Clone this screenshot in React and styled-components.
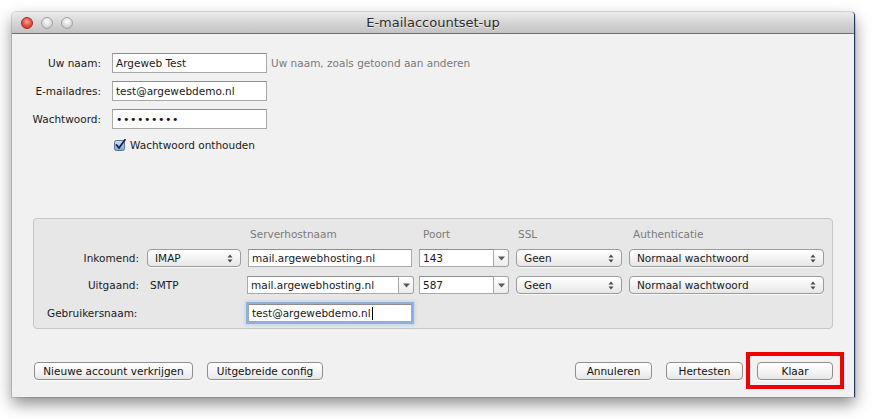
import React from "react";
import styled, { createGlobalStyle } from "styled-components";

const GlobalStyle = createGlobalStyle`
  html, body {
    margin: 0;
    padding: 0;
    background: #ffffff;
  }
  body {
    font-family: "DejaVu Sans", "Liberation Sans", sans-serif;
    font-size: 10.5px;
    color: #1a1a1a;
  }
`;

const Page = styled.div`
  width: 876px;
  height: 419px;
  padding: 12px 0 0 12px;
  box-sizing: border-box;
`;

const Window = styled.div`
  width: 843px;
  height: 385px;
  display: flex;
  flex-direction: column;
  background: #f1f1f1;
  border-right: 1px solid #1f3562;
  box-sizing: border-box;
  border-radius: 4px 4px 0 0;
  box-shadow: 0 7px 16px rgba(0, 0, 0, 0.45), 0 0 0 1px rgba(0, 0, 0, 0.12);
`;

const TitleBar = styled.div`
  height: 22px;
  flex: none;
  box-sizing: border-box;
  display: grid;
  grid-template-columns: 1fr auto 1fr;
  align-items: center;
  padding: 0 9px;
  border-radius: 4px 4px 0 0;
  background: linear-gradient(#ececec, #d2d2d2 60%, #c3c3c3);
  border-bottom: 1px solid #6f6f6f;
`;

const Lights = styled.div`
  display: flex;
  gap: 8px;
`;

const Light = styled.span`
  width: 12px;
  height: 12px;
  border-radius: 50%;
  box-sizing: border-box;
  border: 1px solid ${(p) => (p.$red ? "#a52a22" : "#a3a3a3")};
  background: ${(p) =>
    p.$red
      ? "radial-gradient(circle at 50% 35%, #ffb3a8 0%, #f35d4f 40%, #c4251b 100%)"
      : "radial-gradient(circle at 50% 35%, #ffffff 0%, #e2e2e2 45%, #b9b9b9 100%)"};
`;

const Title = styled.div`
  font-size: 13px;
  color: #2c2c2c;
  text-shadow: 0 1px 0 rgba(255, 255, 255, 0.6);
`;

const Content = styled.div`
  flex: 1;
  display: flex;
  flex-direction: column;
  padding: 19px 21px 0 21px;
`;

const Form = styled.div`
  display: grid;
  grid-template-columns: 68px 155px auto;
  grid-auto-rows: 20px;
  column-gap: 11px;
  row-gap: 8px;
  align-items: center;
`;

const Label = styled.div`
  display: flex;
  justify-content: flex-end;
  white-space: nowrap;
`;

const TextField = styled.div`
  height: ${(p) => p.$h || 20}px;
  box-sizing: border-box;
  background: #ffffff;
  border: 1px solid #a9a9a9;
  border-top-color: #8e8e8e;
  padding: 0 3px;
  display: flex;
  align-items: center;
  white-space: nowrap;
  overflow: hidden;
  box-shadow: ${(p) =>
    p.$focus ? "0 0 0 2px rgba(120, 165, 225, 0.75), 0 0 3px 3px rgba(120,165,225,0.35)" : "none"};
`;

const Dots = styled.span`
  letter-spacing: 0.5px;
  font-size: 11px;
`;

const Hint = styled.div`
  color: #7a7a7a;
  white-space: nowrap;
  margin-left: -7px;
`;

const CheckRow = styled.label`
  grid-column: 2 / 4;
  align-self: start;
  display: flex;
  align-items: center;
  gap: 4px;
  height: 14px;
  margin-top: 1px;
  margin-left: 2px;
`;

const Group = styled.div`
  margin-top: 61px;
  height: 111px;
  box-sizing: border-box;
  background: #e7e7e7;
  border: 1px solid #c6c6c6;
  border-radius: 4px;
  padding: 7px 8px 0 0;
  display: grid;
  grid-template-columns: 106px 94px 164px 90px 106px 195px;
  grid-template-rows: 14px 18px 18px 20px;
  column-gap: 7px;
  row-gap: 9px;
  align-items: center;
`;

const ColHead = styled.div`
  color: #7b7b7b;
  padding-left: ${(p) => p.$pad ?? 3}px;
  align-self: end;
`;

const RowLabel = styled.div`
  text-align: right;
  padding-right: 1px;
`;

const UserLabel = styled.div`
  grid-column: 1 / 3;
  padding-left: 13px;
`;

const PlainValue = styled.div`
  padding-left: 3px;
`;

const Popup = styled.div`
  height: 18px;
  box-sizing: border-box;
  border: 1px solid #9c9c9c;
  border-radius: 4px;
  background: linear-gradient(#ffffff, #f3f3f3 50%, #e6e6e6);
  box-shadow: 0 1px 0 rgba(255, 255, 255, 0.7);
  display: flex;
  align-items: center;
  justify-content: space-between;
  padding: 0 7px 0 7px;
  white-space: nowrap;
`;

const Combo = styled.div`
  height: 18px;
  display: flex;
  margin-left: ${(p) => p.$ml || 0}px;
  margin-right: ${(p) => p.$mr || 0}px;
`;

const ComboText = styled.div`
  flex: 1;
  box-sizing: border-box;
  background: #ffffff;
  border: 1px solid #a9a9a9;
  border-top-color: #8e8e8e;
  padding: 0 3px;
  display: flex;
  align-items: center;
  white-space: nowrap;
  overflow: hidden;
`;

const ComboArrow = styled.div`
  width: 15px;
  flex: none;
  box-sizing: border-box;
  border: 1px solid #a3a3a3;
  border-left: none;
  border-radius: 0 3px 3px 0;
  background: linear-gradient(#ffffff, #ececec);
  display: flex;
  align-items: center;
  justify-content: center;
`;

const Caret = styled.span`
  display: inline-block;
  width: 1px;
  height: 13px;
  background: #000;
  margin-left: 1px;
`;

const Footer = styled.div`
  margin-top: 33px;
  display: flex;
  justify-content: space-between;
  padding: 0 0 0 1px;
`;

const ButtonGroup = styled.div`
  display: flex;
  gap: 14px;
`;

const Button = styled.button`
  height: 18px;
  width: ${(p) => p.$w}px;
  box-sizing: border-box;
  padding: 0;
  font-family: inherit;
  font-size: 10.5px;
  color: #111;
  border: 1px solid #8f8f8f;
  border-radius: 4px;
  background: linear-gradient(#ffffff, #f5f5f5 50%, #e7e7e7);
  box-shadow: 0 1px 0 rgba(255, 255, 255, 0.7);
`;

const Highlight = styled.div`
  position: relative;
`;

const RedBox = styled.div`
  position: absolute;
  top: -10px;
  left: -11px;
  right: -11px;
  bottom: -9px;
  border: 4px solid #f20000;
  pointer-events: none;
`;

const UpDown = () => (
  <svg width="6" height="9" viewBox="0 0 6 9">
    <path d="M3 0.5 L5.5 3.5 H0.5 Z M3 8.5 L5.5 5.5 H0.5 Z" fill="#4a4a4a" />
  </svg>
);

const Down = () => (
  <svg width="7" height="5" viewBox="0 0 7 5">
    <path d="M0 0.5 H7 L3.5 4.5 Z" fill="#5a5a5a" />
  </svg>
);

const CheckBox = () => (
  <svg width="12" height="12" viewBox="0 0 12 12">
    <defs>
      <linearGradient id="cb" x1="0" y1="0" x2="0" y2="1">
        <stop offset="0" stopColor="#d4e3f6" />
        <stop offset="1" stopColor="#7ea4d8" />
      </linearGradient>
    </defs>
    <rect x="0.5" y="1.5" width="10" height="10" rx="2" fill="url(#cb)" stroke="#58729c" />
    <path d="M2.5 6 L5 9 L11 0.8" fill="none" stroke="#15233f" strokeWidth="1.8" strokeLinecap="round" strokeLinejoin="round" />
  </svg>
);

export default function App() {
  return (
    <>
      <GlobalStyle />
      <Page>
        <Window>
          <TitleBar>
            <Lights>
              <Light $red />
              <Light />
              <Light />
            </Lights>
            <Title>E-mailaccountset-up</Title>
            <div />
          </TitleBar>
          <Content>
            <Form>
              <Label>Uw naam:</Label>
              <TextField>Argeweb Test</TextField>
              <Hint>Uw naam, zoals getoond aan anderen</Hint>

              <Label>E-mailadres:</Label>
              <TextField>test@argewebdemo.nl</TextField>
              <div />

              <Label>Wachtwoord:</Label>
              <TextField>
                <Dots>•••••••••</Dots>
              </TextField>
              <div />

              <div />
              <CheckRow>
                <CheckBox />
                Wachtwoord onthouden
              </CheckRow>
            </Form>

            <Group>
              <div />
              <div />
              <ColHead $pad={2}>Serverhostnaam</ColHead>
              <ColHead $pad={4}>Poort</ColHead>
              <ColHead $pad={2}>SSL</ColHead>
              <ColHead $pad={4}>Authenticatie</ColHead>

              <RowLabel>Inkomend:</RowLabel>
              <Popup>
                IMAP
                <UpDown />
              </Popup>
              <TextField $h={18}>mail.argewebhosting.nl</TextField>
              <Combo>
                <ComboText>143</ComboText>
                <ComboArrow>
                  <Down />
                </ComboArrow>
              </Combo>
              <Popup>
                Geen
                <UpDown />
              </Popup>
              <Popup>
                Normaal wachtwoord
                <UpDown />
              </Popup>

              <RowLabel>Uitgaand:</RowLabel>
              <PlainValue>SMTP</PlainValue>
              <Combo $ml={-1} $mr={-2}>
                <ComboText>mail.argewebhosting.nl</ComboText>
                <ComboArrow>
                  <Down />
                </ComboArrow>
              </Combo>
              <Combo>
                <ComboText>587</ComboText>
                <ComboArrow>
                  <Down />
                </ComboArrow>
              </Combo>
              <Popup>
                Geen
                <UpDown />
              </Popup>
              <Popup>
                Normaal wachtwoord
                <UpDown />
              </Popup>

              <UserLabel>Gebruikersnaam:</UserLabel>
              <TextField $h={18} $focus>
                test@argewebdemo.nl
                <Caret />
              </TextField>
            </Group>

            <Footer>
              <ButtonGroup>
                <Button $w={159}>Nieuwe account verkrijgen</Button>
                <Button $w={116}>Uitgebreide config</Button>
              </ButtonGroup>
              <ButtonGroup>
                <Button $w={77}>Annuleren</Button>
                <Button $w={77}>Hertesten</Button>
                <Highlight>
                  <Button $w={76}>Klaar</Button>
                  <RedBox />
                </Highlight>
              </ButtonGroup>
            </Footer>
          </Content>
        </Window>
      </Page>
    </>
  );
}
